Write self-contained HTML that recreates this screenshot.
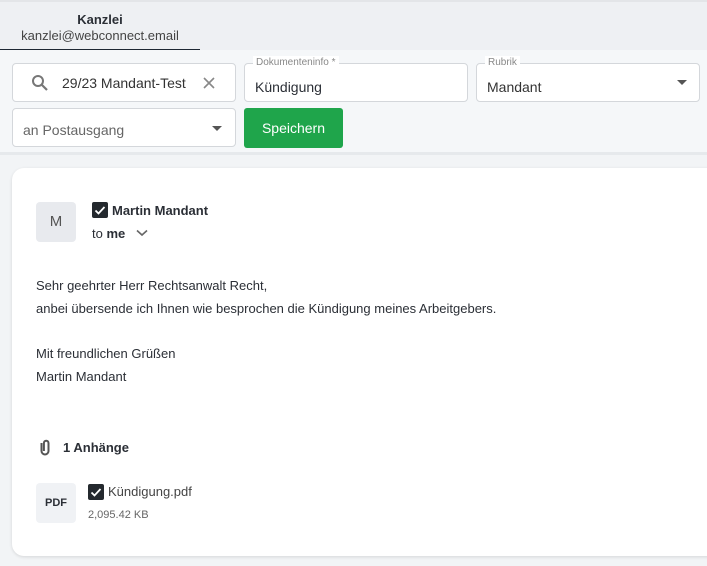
<!DOCTYPE html>
<html><head><meta charset="utf-8"><style>
*{box-sizing:border-box;margin:0;padding:0}
body{width:707px;height:566px;overflow:hidden;background:#f2f4f6;font-family:"Liberation Sans",sans-serif;color:#2b2f36;position:relative}
.top{position:absolute;left:0;top:0;width:707px;height:50px;background:#eef0f3;border-top:2px solid #e3e5e8}
.tab{position:absolute;left:0;top:0;width:200px;height:50px;border-bottom:3px solid #1e2733;text-align:center}
.tab b{display:block;font-size:13px;margin-top:10px;color:#2b2f36}
.tab span{display:block;font-size:13px;color:#444;margin-top:1px}
.hdr{position:absolute;left:0;top:50px;width:707px;height:105px;background:#f5f7f9;border-bottom:3px solid #e6e9ec}
.f{position:absolute;background:#fff;border:1px solid #d4d7db;border-radius:4px;font-size:14px}
.lbl{position:absolute;top:-8px;left:8px;background:#fff;padding:0 3px;font-size:10px;color:#888;line-height:14px}
.tri{position:absolute;width:0;height:0;border-left:5px solid transparent;border-right:5px solid transparent;border-top:5px solid #555}
.card{position:absolute;left:12px;top:168px;width:720px;height:388px;background:#fff;border-radius:12px;box-shadow:0 1px 3px rgba(0,0,0,.12)}
.chk{position:absolute;width:16px;height:16px;background:#24292e;border-radius:2px}
.p{position:absolute;font-size:13px;color:#2b2f36}
</style></head><body>
<div class="top"><div class="tab"><b>Kanzlei</b><span>kanzlei@webconnect.email</span></div></div>
<div class="hdr">
 <div class="f" style="left:12px;top:13px;width:224px;height:39px">
  <svg style="position:absolute;left:18px;top:10px" width="18" height="18" viewBox="0 0 18 18"><circle cx="7" cy="7" r="5" fill="none" stroke="#777" stroke-width="2"/><path d="M11 11l5 5" stroke="#777" stroke-width="2.2"/></svg>
  <span style="position:absolute;left:49px;top:11px;color:#333">29/23 Mandant-Test</span>
  <svg style="position:absolute;left:190px;top:13px" width="12" height="12" viewBox="0 0 12 12"><path d="M1 1l10 10M11 1L1 11" stroke="#888" stroke-width="1.6"/></svg>
 </div>
 <div class="f" style="left:244px;top:13px;width:224px;height:39px"><div class="lbl">Dokumenteninfo *</div><span style="position:absolute;left:10px;top:15px">Kündigung</span></div>
 <div class="f" style="left:476px;top:13px;width:224px;height:39px"><div class="lbl">Rubrik</div><span style="position:absolute;left:10px;top:15px;color:#333">Mandant</span><div class="tri" style="left:200px;top:16px"></div></div>
 <div class="f" style="left:12px;top:58px;width:224px;height:39px"><span style="position:absolute;left:10px;top:13px;color:#666">an Postausgang</span><div class="tri" style="left:199px;top:17px"></div></div>
 <div style="position:absolute;left:244px;top:58px;width:99px;height:40px;background:#1fa54b;border-radius:3px;color:#fff;font-size:14px;text-align:center;line-height:40px">Speichern</div>
</div>
<div class="card">
 <div style="position:absolute;left:24px;top:34px;width:40px;height:40px;background:#e8eaee;border-radius:4px;text-align:center;line-height:40px;color:#555;font-size:15px">M</div>
 <div class="chk" style="left:80px;top:34px"><svg width="16" height="16" viewBox="0 0 16 16"><path d="M3.5 8.5l3 3 6-6.5" fill="none" stroke="#fff" stroke-width="1.8"/></svg></div>
 <div class="p" style="left:100px;top:35px;font-weight:bold">Martin Mandant</div>
 <div class="p" style="left:80px;top:58px">to <b>me</b></div>
 <svg style="position:absolute;left:124px;top:61px" width="12" height="8" viewBox="0 0 12 8"><path d="M1 1.5l5 4.5 5-4.5" fill="none" stroke="#666" stroke-width="1.6"/></svg>
 <div class="p" style="left:24px;top:107px;line-height:22.7px">Sehr geehrter Herr Rechtsanwalt Recht,<br>anbei übersende ich Ihnen wie besprochen die Kündigung meines Arbeitgebers.<br><br>Mit freundlichen Grüßen<br>Martin Mandant</div>
 <svg style="position:absolute;left:25px;top:271px" width="16" height="19" viewBox="0 0 16 19"><path d="M4.5 4v8a3.5 3.5 0 007 0V4a2.3 2.3 0 00-4.6 0V12" fill="none" stroke="#555" stroke-width="2"/></svg>
 <div class="p" style="left:51px;top:272px;font-weight:bold">1 Anhänge</div>
 <div style="position:absolute;left:24px;top:315px;width:40px;height:40px;background:#f0f2f5;border-radius:4px;text-align:center;line-height:40px;font-size:11px;font-weight:bold">PDF</div>
 <div class="chk" style="left:76px;top:316px"><svg width="16" height="16" viewBox="0 0 16 16"><path d="M3.5 8.5l3 3 6-6.5" fill="none" stroke="#fff" stroke-width="1.8"/></svg></div>
 <div class="p" style="left:96px;top:316px;color:#444">Kündigung.pdf</div>
 <div class="p" style="left:76px;top:341px;font-size:11px;color:#666">2,095.42 KB</div>
</div>
</body></html>
